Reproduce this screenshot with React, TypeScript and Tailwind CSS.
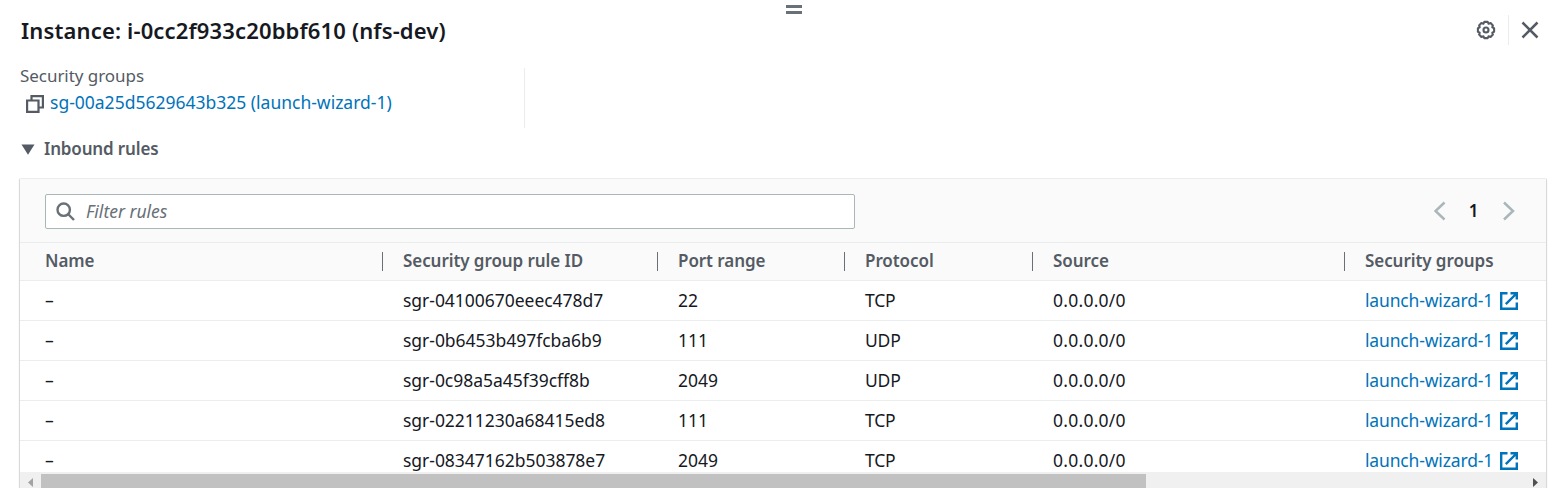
import type { ReactNode } from "react";

const rules = [
  { id: "sgr-04100670eeec478d7", port: "22", protocol: "TCP" },
  { id: "sgr-0b6453b497fcba6b9", port: "111", protocol: "UDP" },
  { id: "sgr-0c98a5a45f39cff8b", port: "2049", protocol: "UDP" },
  { id: "sgr-02211230a68415ed8", port: "111", protocol: "TCP" },
  { id: "sgr-08347162b503878e7", port: "2049", protocol: "TCP" },
];

const columns = "grid grid-cols-[363px_275px_187px_188px_312px_1fr]";

function HeaderCell({ children, first, last }: { children: ReactNode; first?: boolean; last?: boolean }) {
  return (
    <div className={`flex h-full items-center justify-between ${first ? "pl-[25px]" : "pl-5"}`}>
      <span className="whitespace-nowrap pb-[2px]">{children}</span>
      {!last && <span className="h-[19px] w-px bg-[#687078]" />}
    </div>
  );
}

function GearIcon() {
  return (
    <svg className="size-[22px]" viewBox="0 0 22 22" fill="none" stroke="#545b64" strokeWidth="2.1">
      <path
        strokeLinejoin="round"
        d="M9.300 1.900h3.400l.9 1.800 2-.6 2.300 2.300-.6 2 1.800.9v3.400l-1.800.9.6 2-2.300 2.300-2-.6-.9 1.800H9.300l-.9-1.800-2 .6-2.300-2.300.6-2-1.800-.9V8.300l1.800-.9-.6-2 2.300-2.300 2 .6z"
        transform="translate(0 1)"
      />
      <circle cx="11" cy="11" r="2.500" />
    </svg>
  );
}

function ExternalIcon() {
  return (
    <svg className="size-[18px] shrink-0" viewBox="0 0 18 18" fill="none" stroke="#0073bb" strokeWidth="2.4">
      <path d="M7.500 1.200H1.200v15.600h15.600v-6.300" />
      <path d="M10.500 1.200h6.300v6.300M16.500 1.500 5.800 12.200" />
    </svg>
  );
}

export default function App() {
  return (
    <div className="flex h-[488px] w-full flex-col overflow-hidden bg-white font-['Noto_Sans',sans-serif] text-[17px] leading-6 text-[#16191f]">
      <div className="flex h-[15px] shrink-0 flex-col items-center gap-[3px] pl-[37px] pt-[5px]">
        <span className="h-[3px] w-4 bg-[#687078]" />
        <span className="h-[3px] w-4 bg-[#687078]" />
      </div>

      <header className="flex h-[30px] shrink-0 items-center justify-between pl-[21px] pr-[11px]">
        <h1 className="text-[22px] font-semibold tracking-[0.15px]">Instance: i-0cc2f933c20bbf610 (nfs-dev)</h1>
        <div className="flex items-center">
          <GearIcon />
          <span className="ml-[11px] h-[30px] w-px bg-[#eaeded]" />
          <svg className="ml-3 size-[18px]" viewBox="0 0 18 18" stroke="#545b64" strokeWidth="2.500">
            <path d="m1.500 1.500 15 15m0-15-15 15" />
          </svg>
        </div>
      </header>

      <section className="mt-[23px] h-[60px] w-[525px] shrink-0 border-r border-[#eaeded] pl-5">
        <div className="-mt-[4px] leading-[24px] tracking-[-0.05px] text-[#545b64]">Security groups</div>
        <div className="mt-[3px] flex items-center pl-[6px]">
          <svg className="mt-px size-[18px]" viewBox="0 0 18 18" fill="none" stroke="#545b64" strokeWidth="2.200">
            <path d="M1.100 5.500h11.400v11.400H1.100z" />
            <path d="M5.500 5.500V1.100h11.400v11.400h-4.400" />
          </svg>
          <a className="ml-[6px] whitespace-nowrap pb-[2px] text-[17.5px] leading-[22px] text-[#0073bb]">sg-00a25d5629643b325 (launch-wizard-1)</a>
        </div>
      </section>

      <div className="mt-[9px] flex h-6 shrink-0 items-center pl-[21px] font-semibold text-[#545b64]">
        <svg className="mt-px h-[11px] w-[14px]" viewBox="0 0 14 11">
          <path d="M.500.500h13L7 10.800z" fill="#545b64" />
        </svg>
        <h2 className="ml-[9px] tracking-[-0.15px]">Inbound rules</h2>
      </div>

      <div className="ml-[19px] mt-[17px] flex h-[320px] w-[1528px] shrink-0 flex-col rounded-t-[2px] border border-x-[#d5dbdb] border-t-[#eaeded] shadow-[0_1px_1px_rgba(0,28,36,0.2)]">
        <div className="flex h-[64px] shrink-0 items-center justify-between border-b border-[#eaeded] bg-[#fafafa] pl-[25px] pr-[31px] pt-px">
          <label className="flex h-[35px] w-[810px] items-center rounded-[2px] border border-[#aab7b8] bg-white pl-[10px]">
            <svg className="size-[19px]" viewBox="0 0 19 19" fill="none" stroke="#687078" strokeWidth="2.400">
              <circle cx="7.700" cy="7.700" r="6.200" />
              <path d="m12 12 6 6" />
            </svg>
            <span className="ml-[11px] pb-px text-[17.5px] italic text-[#687078]">Filter rules</span>
          </label>
          <div className="flex items-center">
            <svg className="h-5 w-3" viewBox="0 0 12 20" fill="none" stroke="#aab7b8" strokeWidth="2.500">
              <path d="M10.500 1.500 1.500 10l9 8.500" />
            </svg>
            <span className="w-[57px] pr-[2px] text-center font-semibold">1</span>
            <svg className="h-5 w-3" viewBox="0 0 12 20" fill="none" stroke="#aab7b8" strokeWidth="2.500">
              <path d="m1 1.500 9 8.500-9 8.500" />
            </svg>
          </div>
        </div>

        <div className={`${columns} h-[38px] shrink-0 items-center border-b border-[#eaeded] bg-[#fafafa] font-semibold tracking-[-0.07px] text-[#545b64]`}>
          <HeaderCell first>Name</HeaderCell>
          <HeaderCell>Security group rule ID</HeaderCell>
          <HeaderCell>Port range</HeaderCell>
          <HeaderCell>Protocol</HeaderCell>
          <HeaderCell>Source</HeaderCell>
          <HeaderCell last>Security groups</HeaderCell>
        </div>

        <div className="h-[191px] shrink-0 overflow-hidden bg-white text-[17.5px]">
          {rules.map((rule) => (
            <div key={rule.id} className={`${columns} h-10 items-center border-b border-[#eaeded]`}>
              <span className="pb-[2px] pl-[25px]">–</span>
              <span className="pb-[2px] pl-5 tracking-[-0.03px]">{rule.id}</span>
              <span className="pb-[2px] pl-5">{rule.port}</span>
              <span className="pb-[2px] pl-5 tracking-[-0.2px]">{rule.protocol}</span>
              <span className="pb-[2px] pl-5 tracking-[0.25px]">0.0.0.0/0</span>
              <a className="flex items-center gap-[7px] whitespace-nowrap pl-5 text-[#0073bb]">
                <span className="w-[128px] pb-[2px] tracking-[-0.15px]">launch-wizard-1</span>
                <ExternalIcon />
              </a>
            </div>
          ))}
        </div>

        <div className="flex h-[21px] shrink-0 items-center bg-[#f0f0f0]">
          <svg className="ml-2 h-[9px] w-[5px]" viewBox="0 0 5 9">
            <path d="M5 0v9L0 4.500z" fill="#a3a3a3" />
          </svg>
          <span className="ml-2 mt-[2px] h-[19px] w-[1105px] bg-[#c1c1c1]" />
          <svg className="ml-auto mr-2 h-[9px] w-[5px]" viewBox="0 0 5 9">
            <path d="M0 0v9l5-4.500z" fill="#505050" />
          </svg>
        </div>
      </div>
    </div>
  );
}
